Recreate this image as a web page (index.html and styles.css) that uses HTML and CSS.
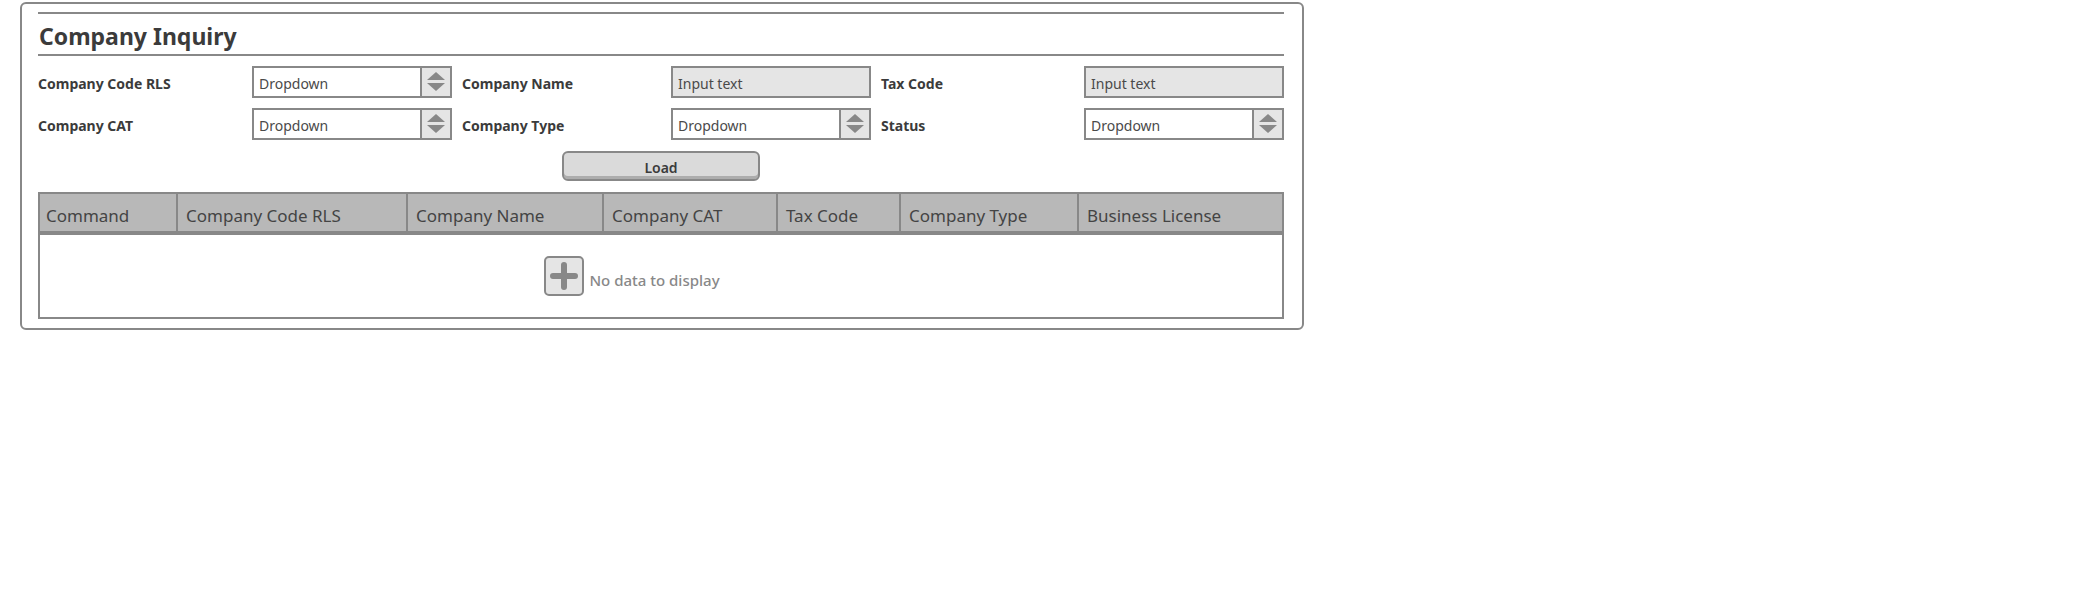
FILE: index.html
```html
<!DOCTYPE html>
<html lang="en">
<head>
<meta charset="utf-8">
<title>Company Inquiry</title>
<link rel="stylesheet" href="styles.css">
</head>
<body>
<main class="panel">
  <h1 class="panel-title">Company Inquiry</h1>
  <form class="filters">
    <div class="fields">
      <label class="field-label" for="code-rls">Company Code RLS</label>
      <div class="dropdown">
        <select class="control" id="code-rls"><option>Dropdown</option></select>
        <svg class="arrows" viewBox="0 0 28 28" aria-hidden="true"><path d="M14 4l9 8H5zM5 15h18l-9 8z"/></svg>
      </div>
      <label class="field-label" for="name">Company Name</label>
      <input class="control control-text" id="name" type="text" value="Input text">
      <label class="field-label" for="tax">Tax Code</label>
      <input class="control control-text" id="tax" type="text" value="Input text">
      <label class="field-label" for="cat">Company CAT</label>
      <div class="dropdown">
        <select class="control" id="cat"><option>Dropdown</option></select>
        <svg class="arrows" viewBox="0 0 28 28" aria-hidden="true"><path d="M14 4l9 8H5zM5 15h18l-9 8z"/></svg>
      </div>
      <label class="field-label" for="type">Company Type</label>
      <div class="dropdown">
        <select class="control" id="type"><option>Dropdown</option></select>
        <svg class="arrows" viewBox="0 0 28 28" aria-hidden="true"><path d="M14 4l9 8H5zM5 15h18l-9 8z"/></svg>
      </div>
      <label class="field-label" for="status">Status</label>
      <div class="dropdown">
        <select class="control" id="status"><option>Dropdown</option></select>
        <svg class="arrows" viewBox="0 0 28 28" aria-hidden="true"><path d="M14 4l9 8H5zM5 15h18l-9 8z"/></svg>
      </div>
    </div>
    <button class="load" type="button">Load</button>
  </form>
  <table class="results">
    <colgroup>
      <col class="col-command"><col class="col-code"><col class="col-name"><col class="col-cat"><col class="col-tax"><col class="col-type"><col class="col-license">
    </colgroup>
    <thead>
      <tr>
        <th>Command</th><th>Company Code RLS</th><th>Company Name</th><th>Company CAT</th><th>Tax Code</th><th>Company Type</th><th>Business License</th>
      </tr>
    </thead>
    <tbody>
      <tr>
        <td colspan="7">
          <div class="empty">
            <button class="add" type="button" aria-label="Add">
              <svg class="plus" viewBox="0 0 28 28" aria-hidden="true"><path d="M14 3v22M3 14h22"/></svg>
            </button>
            <span class="empty-text">No data to display</span>
          </div>
        </td>
      </tr>
    </tbody>
  </table>
</main>
</body>
</html>
```
FILE: styles.css
```css
* {
  box-sizing: border-box;
}

body {
  margin: 0;
  padding: 2px 20px;
  background: #fff;
  color: #3b3b3b;
  font-family: "Noto Sans", "Open Sans", sans-serif;
  font-size: 14px;
}

.panel {
  max-width: 1284px;
  padding: 8px 18px 9px 16px;
  border: 2px solid #888;
  border-radius: 6px;
}

.panel-title {
  margin: 0;
  padding: 6px 0 2px 1px;
  border-top: 2px solid #888;
  border-bottom: 2px solid #888;
  font-size: 23px;
  line-height: 32px;
  font-weight: 700;
}

.filters {
  display: flex;
  flex-direction: column;
  gap: 11px;
  padding: 10px 0 11px;
}

.fields {
  display: grid;
  grid-template-columns: 204fr 200fr 199fr 200fr 193fr 200fr;
  gap: 10px;
}

.field-label {
  padding-top: 4px;
  line-height: 28px;
  font-weight: 700;
}

.control {
  grid-area: 1 / 1;
  width: 100%;
  height: 32px;
  margin: 0;
  padding: 2px 5px 0;
  border: 2px solid #888;
  border-radius: 0;
  background: #fff;
  color: #4a4a4a;
  font: inherit;
  appearance: none;
}

.control-text {
  grid-area: auto;
  background: #e5e5e5;
}

.dropdown {
  display: grid;
}

.arrows {
  grid-area: 1 / 1;
  justify-self: end;
  width: 32px;
  height: 32px;
  border: 2px solid #888;
  background: #e5e5e5;
  fill: #888;
  pointer-events: none;
}

.load {
  align-self: center;
  width: 198px;
  height: 30px;
  padding: 2px 0 0;
  border: 2px solid #888;
  border-radius: 6px;
  background: #dadada;
  box-shadow: inset 0 -3px #adadad;
  color: #3b3b3b;
  font: inherit;
  font-weight: 600;
}

.results {
  width: 100%;
  border-collapse: collapse;
  table-layout: fixed;
}

.results th {
  height: 40px;
  padding: 6px 0 0 8px;
  border: 2px solid #888;
  border-bottom-width: 4px;
  background: #b8b8b8;
  color: #444;
  font-size: 17px;
  font-weight: 400;
  line-height: 24px;
  text-align: left;
  white-space: nowrap;
}

.results th:first-child {
  padding-left: 6px;
}

.results td {
  padding: 21px 0;
  border: 2px solid #888;
}

.col-command { width: 138px; }
.col-code { width: 230px; }
.col-name { width: 196px; }
.col-cat { width: 174px; }
.col-tax { width: 123px; }
.col-type { width: 178px; }
.col-license { width: 205px; }

.empty {
  display: flex;
  align-items: center;
  justify-content: center;
  gap: 5px;
  padding-right: 58px;
}

.add {
  display: flex;
  width: 40px;
  height: 40px;
  padding: 4px;
  border: 2px solid #888;
  border-radius: 5px;
  background: #e5e5e5;
}

.plus {
  width: 28px;
  height: 28px;
  fill: none;
  stroke: #888;
  stroke-width: 6;
  stroke-linecap: round;
}

.empty-text {
  padding-top: 8px;
  color: #888;
  font-size: 15px;
  font-weight: 500;
  line-height: 24px;
}
```
